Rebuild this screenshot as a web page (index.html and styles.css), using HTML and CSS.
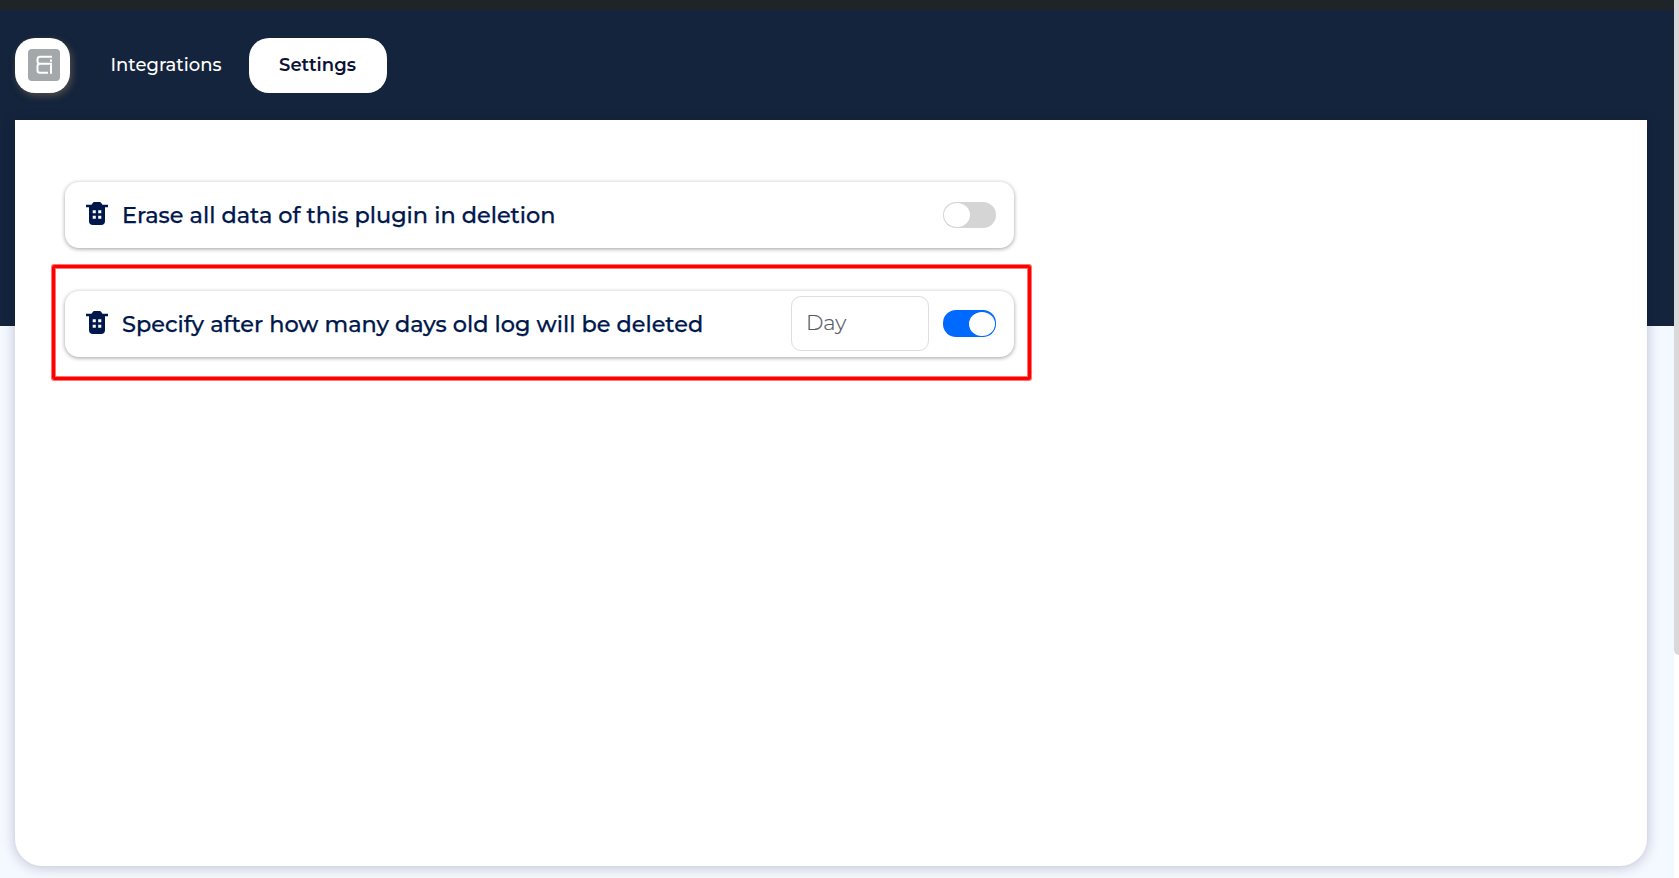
FILE: index.html
```html
<!DOCTYPE html>
<html lang="en">
<head>
<meta charset="utf-8">
<title>Settings</title>
<link rel="stylesheet" href="styles.css">
</head>
<body>
<svg class="defs" aria-hidden="true">
  <symbol id="trash" viewBox="0 0 22 23">
    <path fill-rule="evenodd" d="M5.500 2.800 6.900.8Q7.400 0 8.300 0h5.400q.9 0 1.400.8l1.400 2H22v2.400H19V19q0 4-4 4H7q-4 0-4-4V5.200H0V2.800zM6.700 8.200h3.100v3.100H6.700zm5.500 0h3.100v3.100h-3.100zM6.700 13.700h3.100v3.100H6.700zm5.500 0h3.100v3.100h-3.100z"/>
  </symbol>
</svg>
<div class="app">
  <div class="page">
    <div class="topbar"></div>
    <header class="header">
      <div class="logo">
        <svg width="32" height="32" viewBox="0 0 32 32">
          <rect width="32" height="32" rx="4" fill="#a5a8ab"/>
          <path d="M24 7.700H12q-2.500 0-2.500 2.500v2q0 2.500 2.500 2.500h11v10M12 14.700q-2.500 0-2.500 2.500v4q0 2.500 2.500 2.500h8M23 10.500v2.200" fill="none" stroke="#fff" stroke-width="2"/>
        </svg>
      </div>
      <nav class="nav">
        <a class="tab"><span class="tab-text">Integrations</span></a>
        <a class="tab active"><span class="tab-text">Settings</span></a>
      </nav>
    </header>
    <main class="panel">
      <div class="card first">
        <svg class="icon"><use href="#trash"/></svg>
        <span class="label">Erase all data of this plugin in deletion</span>
        <span class="toggle"><i class="knob"></i></span>
      </div>
      <div class="highlight">
        <div class="card second">
          <svg class="icon"><use href="#trash"/></svg>
          <span class="label">Specify after how many days old log will be deleted</span>
          <input class="day" type="text" placeholder="Day">
          <span class="toggle on"><i class="knob"></i></span>
        </div>
      </div>
    </main>
  </div>
  <div class="scroll"><div class="thumb"></div></div>
</div>
</body>
</html>
```
FILE: styles.css
```css
* { box-sizing: border-box; }
body { margin: 0; font-family: Montserrat, Inter, sans-serif; overflow: hidden; }
.defs { display: none; }
.app { display: flex; width: 1679px; height: 878px; }
.page {
  width: 1674px; height: 878px; overflow: hidden;
  background: linear-gradient(#14243c 326px, #f4f8ff 326px);
}
.topbar { height: 10px; background: #1f2428; }
.header { height: 110px; padding: 28px 15px 0; display: flex; align-items: flex-start; }
.logo {
  width: 55px; height: 55px; border-radius: 20px; background: #fff;
  padding: 11px 0 0 13px; box-shadow: 2px 3px 7px rgba(120, 105, 85, .6);
}
.logo svg { display: block; }
.nav { display: flex; margin-left: 14px; }
.tab {
  height: 55px; display: flex; align-items: center; justify-content: center;
  width: 165px; border-radius: 20px; color: #fff; font-size: 18px; font-weight: 500;
  padding: 0 1px 1px 0; white-space: nowrap;
}
.tab.active { width: 138px; background: #fff; color: #0b1238; font-weight: 600; }
.panel {
  margin-left: 15px; width: 1632px; height: 746px; background: #fff;
  border-radius: 0 0 27px 27px; padding: 62px 0 0 36px;
  box-shadow: 0 1px 13px rgba(15, 15, 60, .24);
}
.card {
  width: 949px; height: 66px; border-radius: 14px; background: #fff;
  display: flex; align-items: center; padding: 0 18px 0 21px;
  box-shadow: 0 1px 4px rgba(0, 0, 0, .38);
}
.card.first { margin-left: 14px; }
.icon { width: 22px; height: 23px; fill: #00174b; margin: 0 14px 3px 0; flex: none; }
.label { font-size: 22.4px; font-weight: 500; color: #00174b; -webkit-text-stroke: .25px #00174b; white-space: nowrap; flex: 1; }
.toggle {
  width: 53px; height: 26px; border-radius: 13px; background: #d5d5d5;
  display: flex; align-items: center; padding: 0 1px; flex: none;
}
.knob { width: 26px; height: 24px; border-radius: 50%; background: #fff; }
.toggle.on { background: #0069ff; justify-content: flex-end; height: 27px; margin-bottom: 1px; }
.day {
  width: 138px; height: 55px; margin: 0 14px 1px 0; padding: 0 14px 2px;
  border: 1px solid #dedede; border-radius: 10px; outline: 0; background: #fff;
  font-family: inherit; font-size: 21px; font-weight: 300;
}
.day::placeholder { color: #555962; opacity: 1; -webkit-text-stroke: .2px #555962; }
.highlight {
  margin-top: 17px; margin-left: 1px; width: 979px; height: 115px;
  border: 3px solid #f00; border-radius: 2px; padding: 23px 0 0 10px;
  box-shadow: 0 0 0 1px rgba(255, 0, 0, .55), inset 0 0 0 1px rgba(255, 0, 0, .55);
}
.scroll { width: 5px; background: #fff; }
.thumb { height: 655px; background: #d9d9d9; border-bottom-left-radius: 5px; }
```
